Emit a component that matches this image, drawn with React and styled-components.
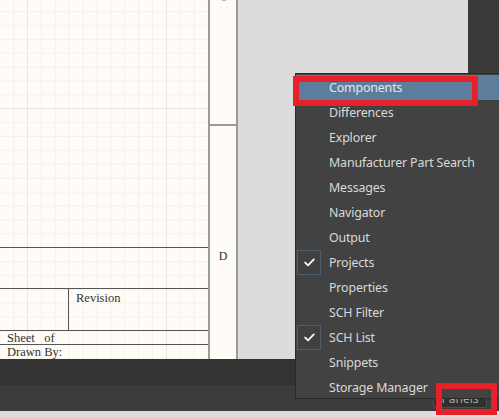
import React from 'react';
import styled, { createGlobalStyle } from 'styled-components';

const Global = createGlobalStyle`
  *, *::before, *::after { box-sizing: border-box; }
  html, body { margin: 0; padding: 0; background: #3c3c3c; }
  body { width: 499px; height: 417px; overflow: hidden; }
`;

const Screen = styled.div`
  position: relative;
  width: 499px;
  height: 417px;
  overflow: hidden;
  display: flex;
  flex-direction: column;
  background: #3c3c3c;
  font-family: "Noto Sans", "Open Sans", sans-serif;
`;

const Workspace = styled.div`
  display: flex;
  height: 359px;
  flex: none;
`;

const Sheet = styled.div`
  display: flex;
  width: 238px;
  flex: none;
  background: #fffcf7;
  overflow: hidden;
`;

const GridArea = styled.div`
  width: 208px;
  flex: none;
  display: flex;
  flex-direction: column;
  justify-content: flex-end;
  background-color: #fffcf7;
  background-image:
    linear-gradient(to right, #eae7e1 1px, transparent 1px),
    linear-gradient(to bottom, #eae7e1 1px, transparent 1px),
    linear-gradient(to right, #f5f2ec 1px, transparent 1px),
    linear-gradient(to bottom, #f5f2ec 1px, transparent 1px);
  background-size: 139px 139px, 139px 139px, 13.9px 13.9px, 13.9px 13.9px;
  background-position: 27px 0, 0 108px, 13.1px 0, 0 11px;
`;

const ZoneColumn = styled.div`
  width: 30px;
  flex: none;
  border-left: 2px solid #9b9b9b;
  border-right: 2px solid #9b9b9b;
  display: flex;
  flex-direction: column;
`;

const ZoneCell = styled.div`
  height: ${(p) => p.$h}px;
  flex: none;
  border-bottom: 2px solid #9b9b9b;
  display: flex;
  align-items: ${(p) => (p.$top ? 'flex-start' : 'center')};
  justify-content: center;
  font-family: "Liberation Serif", serif;
  font-size: 12px;
  color: #333;
`;

const ZoneMarkFragment = styled.span`
  width: 4px;
  height: 1px;
  margin-left: 2px;
  background: #b5b5b5;
`;

const TitleBlock = styled.div`
  height: 112px;
  border-top: 1px solid #555;
  display: flex;
  flex-direction: column;
`;

const TitleRow = styled.div`
  height: ${(p) => p.$h}px;
  flex: none;
  display: flex;
  border-bottom: ${(p) => (p.$last ? 'none' : '1px solid #555')};
  font-family: "Liberation Serif", serif;
  font-size: 12.5px;
  color: #333;
  line-height: 13px;
`;

const TitleCell = styled.div`
  width: ${(p) => (p.$w ? `${p.$w}px` : 'auto')};
  flex: ${(p) => (p.$w ? 'none' : '1')};
  border-right: ${(p) => (p.$divider ? '1px solid #555' : 'none')};
  padding: ${(p) => p.$pad || '0 0 0 7px'};
  white-space: pre;
`;

const GrayArea = styled.div`
  flex: 1;
  background: #dcdcdc;
`;

const RightDock = styled.div`
  width: 31px;
  flex: none;
  background: #3a3a3a;
`;

const StatusBar = styled.div`
  height: 26px;
  flex: none;
  background: #333333;
`;

const BottomBar = styled.div`
  height: 26px;
  flex: none;
  background: #3c3c3c;
  display: flex;
  justify-content: flex-end;
  align-items: flex-start;
  padding: 4px 12px 0 0;
`;

const PanelsButton = styled.div`
  width: 54px;
  height: 19px;
  background: #303030;
  border: 1px solid #4e4e4e;
  border-radius: 2px;
  color: #a8a8a8;
  font-size: 12px;
  line-height: 17px;
  text-align: center;
`;

const Footer = styled.div`
  flex: 1;
  background: #dddddd;
`;

const Menu = styled.div`
  position: absolute;
  left: 295px;
  top: 73px;
  width: 215px;
  height: 326px;
  background: #424242;
  border: 1px solid #2a2a2a;
  padding-top: 1px;
  display: flex;
  flex-direction: column;
`;

const MenuItem = styled.div`
  height: 25px;
  flex: none;
  display: flex;
  align-items: center;
  padding-left: 1px;
  background: ${(p) => (p.$active ? '#5d7d9c' : 'transparent')};
  color: ${(p) => (p.$active ? '#e4e8ee' : '#d9d9d9')};
  font-size: 12.4px;
  letter-spacing: -0.15px;
`;

const CheckSlot = styled.div`
  width: 24px;
  height: 25px;
  flex: none;
  margin-right: 8px;
  display: flex;
  align-items: center;
  justify-content: center;
  border: 1px solid ${(p) => (p.$checked ? '#4f5e6e' : 'transparent')};
  background: ${(p) => (p.$checked ? '#404040' : 'transparent')};
`;

const RedBox = styled.div`
  position: absolute;
  left: ${(p) => p.$x}px;
  top: ${(p) => p.$y}px;
  width: ${(p) => p.$w}px;
  height: ${(p) => p.$h}px;
  border: 6px solid #e8202a;
  pointer-events: none;
`;

const Check = () => (
  <svg width="11" height="9" viewBox="0 0 11 9">
    <polyline points="1.2,4.6 4,7.4 9.8,1.4" fill="none" stroke="#f4f4f4" strokeWidth="1.9" strokeLinecap="round" strokeLinejoin="round" />
  </svg>
);

const items = [
  { label: 'Components', active: true },
  { label: 'Differences' },
  { label: 'Explorer' },
  { label: 'Manufacturer Part Search' },
  { label: 'Messages' },
  { label: 'Navigator' },
  { label: 'Output' },
  { label: 'Projects', checked: true },
  { label: 'Properties' },
  { label: 'SCH Filter' },
  { label: 'SCH List', checked: true },
  { label: 'Snippets' },
  { label: 'Storage Manager' },
];

export default function App() {
  return (
    <>
      <Global />
      <Screen>
        <Workspace>
          <Sheet>
            <GridArea>
              <TitleBlock>
                <TitleRow $h={41}>
                  <TitleCell />
                </TitleRow>
                <TitleRow $h={42}>
                  <TitleCell $w={69} $divider />
                  <TitleCell $pad="3px 0 0 7px">Revision</TitleCell>
                </TitleRow>
                <TitleRow $h={14}>
                  <TitleCell $pad="1px 0 0 7px">{'Sheet   of'}</TitleCell>
                </TitleRow>
                <TitleRow $h={14} $last>
                  <TitleCell $pad="1px 0 0 7px">Drawn By:</TitleCell>
                </TitleRow>
              </TitleBlock>
            </GridArea>
            <ZoneColumn>
              <ZoneCell $h={126} $top>
                <ZoneMarkFragment />
              </ZoneCell>
              <ZoneCell $h={262}>D</ZoneCell>
            </ZoneColumn>
          </Sheet>
          <GrayArea />
          <RightDock />
        </Workspace>
        <StatusBar />
        <BottomBar>
          <PanelsButton>Panels</PanelsButton>
        </BottomBar>
        <Footer />
        <Menu>
          {items.map((it) => (
            <MenuItem key={it.label} $active={it.active}>
              <CheckSlot $checked={it.checked}>{it.checked && <Check />}</CheckSlot>
              {it.label}
            </MenuItem>
          ))}
        </Menu>
        <RedBox $x={293} $y={76} $w={185} $h={30} />
        <RedBox $x={436} $y={383} $w={61} $h={32} />
      </Screen>
    </>
  );
}
